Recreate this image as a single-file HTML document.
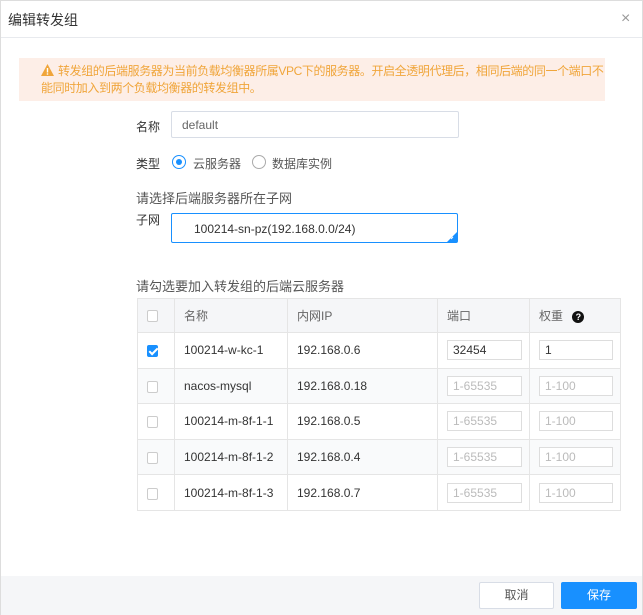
<!DOCTYPE html><html><head><meta charset="utf-8"><style>
*{box-sizing:border-box;margin:0;padding:0}
body{width:643px;height:615px;font-family:"Liberation Sans","Noto Sans CJK SC",sans-serif;font-size:12px;color:#333;background:#fff;position:relative;overflow:hidden}
.dlg{position:absolute;left:0;top:0;width:643px;height:615px;border:1px solid #ddd;}
.abs{position:absolute}
.hdr{left:0;top:0;width:641px;height:37px;border-bottom:1px solid #e8eaee}
.warn{left:18px;top:57px;width:586px;height:43px;background:#fdeee7;color:#f0a53a;font-size:12px;line-height:17px;padding:5px 0 0 22px;white-space:nowrap;letter-spacing:-0.4px}
.inp{position:absolute;border:1px solid #ddd;border-radius:2px;background:#fff;font-size:12px}
table{position:absolute;left:136px;top:297px;width:484px;border-collapse:collapse}
td,th{border:1px solid #e5e5e5;height:35.6px;text-align:left;font-weight:normal;padding-left:9px;padding-top:0;padding-bottom:0}
th{background:#f5f6f8;color:#666;height:34px}
tr:nth-child(odd) td{background:#f9fafb}
.cb{display:inline-block;width:11px;height:12px;border:1px solid #ccc;border-radius:2px;background:#fff;vertical-align:middle}
.ck{background:#1890ff;border-color:#1890ff;position:relative}
.ck:after{content:"";position:absolute;left:3px;top:0px;width:3px;height:7px;border:solid #fff;border-width:0 2px 2px 0;transform:rotate(45deg)}
.box{display:inline-block;width:75px;height:20px;border:1px solid #ddd;padding:2px 5px;color:#bbb;background:#fff;line-height:14px;vertical-align:middle}
.w{width:74px}
.dark{color:#333}
</style></head><body><div class="dlg">
<div class="abs hdr"><span class="abs" style="left:7px;top:9px;font-size:14px;color:#333">编辑转发组</span><span class="abs" style="left:620px;top:9px;font-size:16px;color:#999">×</span></div>
<div class="abs warn"><svg class="abs" style="left:22px;top:6px" width="13" height="12" viewBox="0 0 13 12"><path d="M6.5 0L13 12H0Z" fill="#f0a53a"/><rect x="5.8" y="4" width="1.4" height="4.5" fill="#fff"/><rect x="5.8" y="9.3" width="1.4" height="1.4" fill="#fff"/></svg><span style="padding-left:17px">转发组的后端服务器为当前负载均衡器所属VPC下的服务器。开启全透明代理后，相同后端的同一个端口不</span><br>能同时加入到两个负载均衡器的转发组中。</div>
<span class="abs" style="left:135px;top:117px;font-size:12px">名称</span>
<div class="inp" style="left:170px;top:110px;width:288px;height:27px;border-color:#d8dde6;padding:6px 10px;color:#666">default</div>
<span class="abs" style="left:135px;top:154px">类型</span>
<span class="abs" style="left:171px;top:154px;width:14px;height:14px;border:1px solid #1890ff;border-radius:50%"><span class="abs" style="left:3px;top:3px;width:6px;height:6px;border-radius:50%;background:#1890ff"></span></span>
<span class="abs" style="left:192px;top:154px;color:#555">云服务器</span>
<span class="abs" style="left:251px;top:154px;width:14px;height:14px;border:1px solid #aaa;border-radius:50%"></span>
<span class="abs" style="left:271px;top:154px;color:#555">数据库实例</span>
<span class="abs" style="left:135px;top:187px;font-size:13px;color:#555">请选择后端服务器所在子网</span>
<span class="abs" style="left:135px;top:210px">子网</span>
<div class="inp" style="left:170px;top:212px;width:287px;height:30px;border-color:#1890ff;padding:8px 22px;color:#333">100214-sn-pz(192.168.0.0/24)<svg class="abs" style="right:0;bottom:0" width="10" height="10"><path d="M10 0V10H0Z" fill="#1890ff"/><path d="M4 7L6 5" stroke="#fff"/></svg></div>
<span class="abs" style="left:135px;top:275px;font-size:13px;color:#555">请勾选要加入转发组的后端云服务器</span>
<table>
<tr><th style="width:37px"><span class="cb"></span></th><th style="width:113px">名称</th><th style="width:150px">内网IP</th><th style="width:92px">端口</th><th>权重 <span style="display:inline-block;width:12px;height:12px;border-radius:50%;background:#111;color:#fff;font-size:9px;text-align:center;line-height:12px;font-weight:bold;margin-left:6px">?</span></th></tr>
<tr><td><span class="cb ck"></span></td><td>100214-w-kc-1</td><td>192.168.0.6</td><td><span class="box dark">32454</span></td><td><span class="box w dark">1</span></td></tr>
<tr><td><span class="cb"></span></td><td>nacos-mysql</td><td>192.168.0.18</td><td><span class="box">1-65535</span></td><td><span class="box w">1-100</span></td></tr>
<tr><td><span class="cb"></span></td><td>100214-m-8f-1-1</td><td>192.168.0.5</td><td><span class="box">1-65535</span></td><td><span class="box w">1-100</span></td></tr>
<tr><td><span class="cb"></span></td><td>100214-m-8f-1-2</td><td>192.168.0.4</td><td><span class="box">1-65535</span></td><td><span class="box w">1-100</span></td></tr>
<tr><td><span class="cb"></span></td><td>100214-m-8f-1-3</td><td>192.168.0.7</td><td><span class="box">1-65535</span></td><td><span class="box w">1-100</span></td></tr>
</table>
<div class="abs" style="left:0;top:575px;width:641px;height:39px;background:#f5f6f8"></div>
<div class="abs" style="left:478px;top:581px;width:75px;height:27px;border:1px solid #d8dde6;background:#fff;border-radius:2px;text-align:center;line-height:25px;color:#555">取消</div>
<div class="abs" style="left:560px;top:581px;width:76px;height:27px;background:#1890ff;border-radius:2px;text-align:center;line-height:27px;color:#fff">保存</div>
</div></body></html>
